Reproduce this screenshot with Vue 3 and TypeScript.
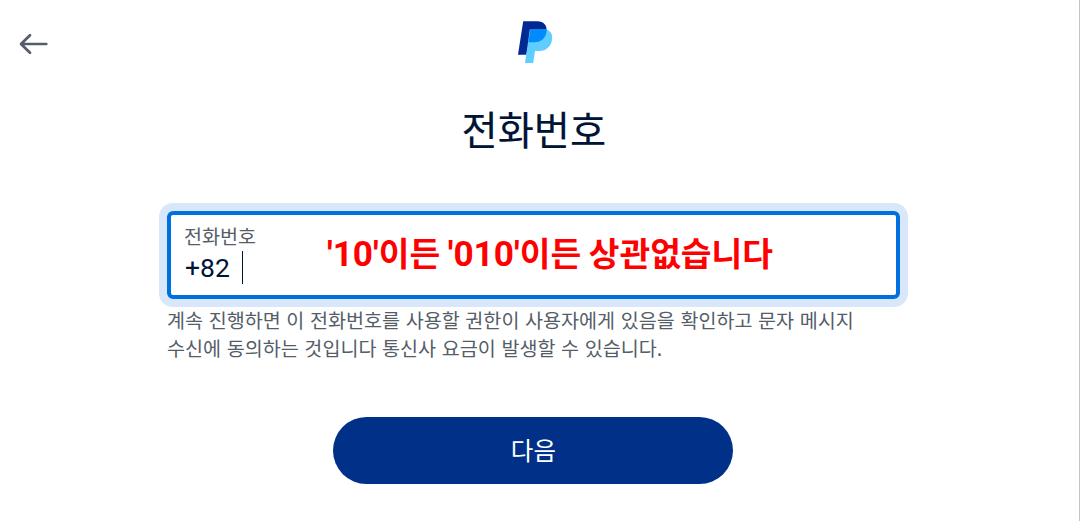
<script setup lang="ts">
import { ref } from 'vue'

interface Run {
  text: string
  latin: boolean
}

const label = ref<string>('전화번호')
const countryCode = ref<string>('+82')
const note: Run[] = [
  { text: "'10'", latin: true },
  { text: '이든 ', latin: false },
  { text: "'010'", latin: true },
  { text: '이든 상관없습니다', latin: false },
]
const consent: string[] = [
  '계속 진행하면 이 전화번호를 사용할 권한이 사용자에게 있음을 확인하고 문자 메시지',
  '수신에 동의하는 것입니다 통신사 요금이 발생할 수 있습니다.',
]
</script>

<template>
  <main class="page">
    <header class="top">
      <button class="back" type="button" aria-label="뒤로">
        <svg width="30" height="22" viewBox="0 0 30 22" fill="none" stroke="#545d68" stroke-width="2.7" stroke-linecap="round" stroke-linejoin="round">
          <path d="M27.3 11H2.5M11 2.2L2 11L11 19.8" />
        </svg>
      </button>
      <svg class="logo" width="36" height="44" viewBox="0 0 36 44">
        <path fill="#002991" d="M6.2 1.2H20.5C26.5 1.2 30 5.2 29.6 10.5L29.4 11.8C28.5 18.2 23.6 22.2 17.2 22.2H12L9.4 34.8H1Z" />
        <path fill="#60cdff" d="M29.8 9.4C33.6 11 35.8 14.4 35.1 19.2C34.1 26.6 29.2 30.9 22.3 30.9H18L16.2 43H8L12.8 9.4Z" />
        <path fill="#008cff" d="M13.4 9.4H29.8C29.4 17.4 24.7 22.2 17.2 22.2H11.4Z" />
      </svg>
    </header>
    <h1 class="title">{{ label }}</h1>
    <section class="form">
      <div class="field">
        <span class="field-label">{{ label }}</span>
        <div class="value"><span>{{ countryCode }}</span><i class="caret"></i></div>
        <strong class="note"><span v-for="(run, i) in note" :key="i" :class="{ latin: run.latin }">{{ run.text }}</span></strong>
      </div>
      <p class="consent">
        <span v-for="line in consent" :key="line">{{ line }}</span>
      </p>
    </section>
    <button class="next" type="button">다음</button>
  </main>
</template>

<style>
body {
  margin: 0;
  background: #fff;
}
</style>

<style scoped>
.page {
  box-sizing: border-box;
  height: 521px;
  overflow: hidden;
  border-right: 1px solid #c4c4c4;
  background: #fff;
  font-family: "Noto Sans CJK KR", sans-serif;
  display: flex;
  flex-direction: column;
  color: #001435;
}
.top {
  height: 88px;
  flex: none;
  display: grid;
  grid-template-columns: 517px 36px;
  align-items: start;
}
.back {
  width: 30px;
  height: 22px;
  margin: 33px 0 0 19px;
  padding: 0;
  border: 0;
  background: none;
}
.back svg {
  display: block;
}
.logo {
  margin-top: 20px;
}
.title {
  margin: 12px 0 0 461.5px;
  height: 56px;
  line-height: 56px;
  font-size: 39.3px;
  font-weight: 400;
  -webkit-text-stroke: 0.15px currentColor;
  white-space: nowrap;
}
.form {
  width: 733px;
  margin: 55px 0 0 167px;
}
.field {
  position: relative;
  box-sizing: border-box;
  height: 88px;
  border: 4px solid #0070e0;
  border-radius: 6px;
  box-shadow: 0 0 0 8px #d8e8fa;
  padding: 8px 0 0 13px;
}
.field-label {
  display: block;
  height: 27px;
  line-height: 26px;
  font-size: 19.6px;
  color: #545d68;
}
.value {
  display: flex;
  align-items: center;
  height: 34px;
  padding-left: 1px;
  font: 26.5px/35px Roboto, sans-serif;
}
.caret {
  width: 1px;
  height: 33px;
  margin-left: 12px;
  background: #001435;
}
.note {
  position: absolute;
  left: 156px;
  top: 14px;
  line-height: 50px;
  font-family: Roboto, "Noto Sans CJK KR", sans-serif;
  font-size: 33.4px;
  font-weight: 700;
  color: #f00;
  white-space: pre;
  word-spacing: -0.7px;
}
.latin {
  font-size: 35.2px;
}
.consent {
  margin: 7px 0 0;
  font-size: 19.6px;
  line-height: 28px;
  word-spacing: 1.2px;
  color: #545d68;
  white-space: nowrap;
}
.consent span {
  display: block;
}
.next {
  width: 400px;
  height: 67px;
  margin: 55px 0 0 333.4px;
  padding: 0 0 2px;
  border: 0;
  border-radius: 34px;
  background: #003087;
  color: #fff;
  font: 400 24.5px/65px "Noto Sans CJK KR", sans-serif;
}
</style>
